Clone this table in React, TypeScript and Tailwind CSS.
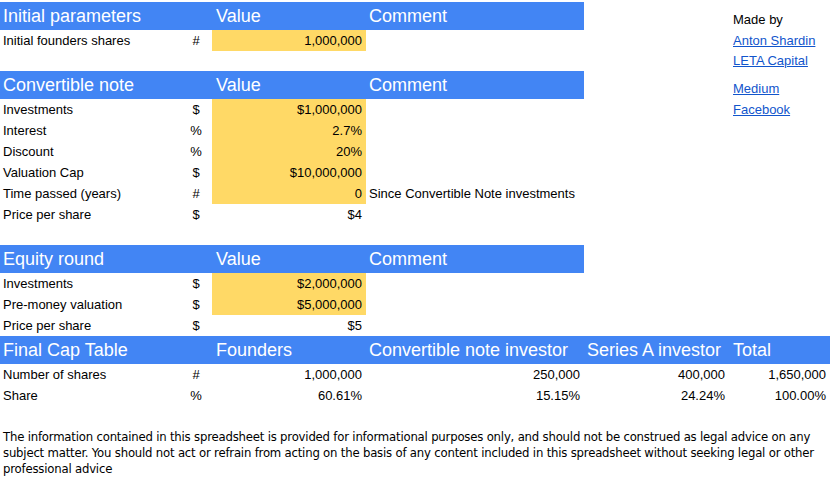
import React from "react";

const cols = "grid grid-cols-[180px_32px_154px_218px_146px_100px]";

function Header({
  title,
  c,
  d,
  e,
  f,
  wide,
  side,
}: {
  title: string;
  c: string;
  d: string;
  e?: string;
  f?: string;
  wide?: boolean;
  side?: React.ReactNode;
}) {
  const blue = "bg-[#4285f4] text-white text-[18px] leading-[21px] pb-[3px] flex items-end whitespace-nowrap";
  return (
    <div className={`${cols} h-[28px]`}>
      <div className={`${blue} pl-[3px]`}>{title}</div>
      <div className={blue} />
      <div className={`${blue} pl-[4px]`}>{c}</div>
      <div className={`${blue} pl-[3px]`}>{d}</div>
      {wide ? (
        <>
          <div className={`${blue} pl-[3px]`}>{e}</div>
          <div className={`${blue} pl-[3px]`}>{f}</div>
        </>
      ) : (
        <>
          <div />
          <div className="flex items-end pl-[3px] pb-[3px] text-[13px] leading-[15px]">{side}</div>
        </>
      )}
    </div>
  );
}

function Row({
  label,
  unit,
  value,
  yellow,
  comment,
  e,
  f,
  side,
}: {
  label?: string;
  unit?: string;
  value?: string;
  yellow?: boolean;
  comment?: string;
  e?: string;
  f?: string;
  side?: React.ReactNode;
}) {
  const cell = "flex items-end pb-[3px] text-[13px] leading-[15px] whitespace-nowrap";
  return (
    <div className={`${cols} h-[21px]`}>
      <div className={`${cell} pl-[3px]`}>{label}</div>
      <div className={`${cell} justify-center`}>{unit}</div>
      <div className={`${cell} justify-end pr-[4px] ${yellow ? "bg-[#ffd966]" : ""}`}>{value}</div>
      <div className={`${cell} ${e !== undefined ? "justify-end pr-[4px]" : "pl-[3px]"}`}>{comment}</div>
      <div className={`${cell} justify-end pr-[5px]`}>{e}</div>
      <div className={`${cell} ${f !== undefined ? "justify-end pr-[4px]" : "pl-[3px]"}`}>{f ?? side}</div>
    </div>
  );
}

function Link({ children }: { children: string }) {
  return <a className="text-[#1155cc] underline">{children}</a>;
}

export default function App() {
  return (
    <div className="w-[833px] h-[482px] bg-white text-[#000] font-['Liberation_Sans',Arial,sans-serif] pt-[2px] overflow-hidden">
      <Header title="Initial parameters" c="Value" d="Comment" side="Made by" />
      <Row label="Initial founders shares" unit="#" value="1,000,000" yellow side={<Link>Anton Shardin</Link>} />
      <div className={`${cols} h-[20px]`}>
        <div />
        <div />
        <div />
        <div />
        <div />
        <div className="flex items-end pl-[3px] pb-[3px] text-[13px] leading-[15px]">
          <Link>LETA Capital</Link>
        </div>
      </div>

      <Header title="Convertible note" c="Value" d="Comment" side={<Link>Medium</Link>} />
      <Row label="Investments" unit="$" value="$1,000,000" yellow side={<Link>Facebook</Link>} />
      <Row label="Interest" unit="%" value="2.7%" yellow />
      <Row label="Discount" unit="%" value="20%" yellow />
      <Row label="Valuation Cap" unit="$" value="$10,000,000" yellow />
      <Row label="Time passed (years)" unit="#" value="0" yellow comment="Since Convertible Note investments" />
      <Row label="Price per share" unit="$" value="$4" />
      <div className="h-[20px]" />

      <Header title="Equity round" c="Value" d="Comment" />
      <Row label="Investments" unit="$" value="$2,000,000" yellow />
      <Row label="Pre-money valuation" unit="$" value="$5,000,000" yellow />
      <Row label="Price per share" unit="$" value="$5" />

      <Header title="Final Cap Table" c="Founders" d="Convertible note investor" e="Series A investor" f="Total" wide />
      <Row label="Number of shares" unit="#" value="1,000,000" comment="250,000" e="400,000" f="1,650,000" />
      <Row label="Share" unit="%" value="60.61%" comment="15.15%" e="24.24%" f="100.00%" />

      <p className="mt-[23px] px-[3px] text-[13px] leading-[16px] tracking-[-0.2px] font-['Liberation_Sans_Narrow','Arial_Narrow','DejaVu_Sans_Condensed',sans-serif]">
        The information contained in this spreadsheet is provided for informational purposes only, and should not be construed as legal advice on any subject matter. You should not act or refrain from acting on the basis of any content included in this spreadsheet without seeking legal or other professional advice
      </p>
    </div>
  );
}
